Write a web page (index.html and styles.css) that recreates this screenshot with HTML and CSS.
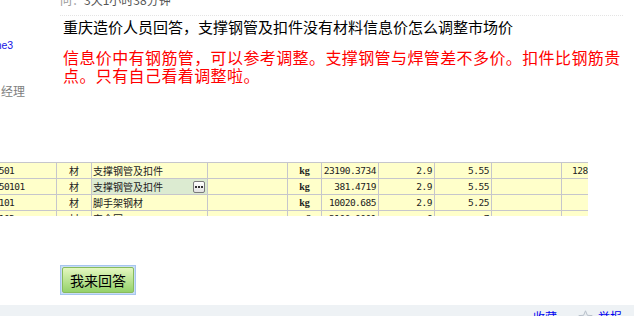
FILE: index.html
```html
<!DOCTYPE html>
<html lang="zh-CN">
<head>
<meta charset="utf-8">
<title>问答</title>
<link rel="stylesheet" href="styles.css">
</head>
<body>
<div class="post">
  <aside class="author">
    <div class="author-name">wayne3</div>
    <div class="author-role">项目经理</div>
  </aside>
  <div class="content">
    <div class="meta"><span class="meta-label">问：</span>3天1小时38分钟</div>
    <h1 class="title">重庆造价人员回答，支撑钢管及扣件没有材料信息价怎么调整市场价</h1>
    <p class="answer">信息价中有钢筋管，可以参考调整。支撑钢管与焊管差不多价。扣件比钢筋贵点。只有自己看着调整啦。</p>
  </div>
</div>

<div class="shot">
  <div class="grid">
    <div class="cell code">040501</div>
    <div class="cell mid">材</div>
    <div class="cell name">支撑钢管及扣件</div>
    <div class="cell"></div>
    <div class="cell unit">kg</div>
    <div class="cell num">23190.3734</div>
    <div class="cell num">2.9</div>
    <div class="cell num">5.55</div>
    <div class="cell"></div>
    <div class="cell num left">128706.58</div>

    <div class="cell code">04050101</div>
    <div class="cell mid">材</div>
    <div class="cell name sel">支撑钢管及扣件<span class="more"><svg width="8" height="2" viewBox="0 0 8 2"><rect x="0" y="0" width="2" height="2" fill="#333"/><rect x="3" y="0" width="2" height="2" fill="#333"/><rect x="6" y="0" width="2" height="2" fill="#333"/></svg></span></div>
    <div class="cell"></div>
    <div class="cell unit">kg</div>
    <div class="cell num">381.4719</div>
    <div class="cell num">2.9</div>
    <div class="cell num">5.55</div>
    <div class="cell"></div>
    <div class="cell"></div>

    <div class="cell code">040101</div>
    <div class="cell mid">材</div>
    <div class="cell name">脚手架钢材</div>
    <div class="cell"></div>
    <div class="cell unit">kg</div>
    <div class="cell num">10020.685</div>
    <div class="cell num">2.9</div>
    <div class="cell num">5.25</div>
    <div class="cell"></div>
    <div class="cell"></div>

    <div class="cell code">040102</div>
    <div class="cell mid">材</div>
    <div class="cell name">安全网</div>
    <div class="cell"></div>
    <div class="cell unit">m2</div>
    <div class="cell num">3100.0001</div>
    <div class="cell num">6</div>
    <div class="cell num">7</div>
    <div class="cell"></div>
    <div class="cell"></div>
  </div>
</div>

<div class="actions">
  <span class="reply"><button class="reply-btn" type="button">我来回答</button></span>
</div>

<div class="footer">
  <a class="footer-link fav" href="#">收藏</a>
  <svg class="star" width="15" height="15" viewBox="0 0 15 15"><polygon points="7.5,0.8 9.4,5.3 14.2,5.6 10.5,8.7 11.7,13.6 7.5,11 3.3,13.6 4.5,8.7 0.8,5.6 5.6,5.3" fill="#e9edf1" stroke="#b8c0ca" stroke-width="1"/></svg>
  <a class="footer-link" href="#">举报</a>
</div>
</body>
</html>
```

FILE: styles.css
```css
html, body {
  margin: 0;
  padding: 0;
}

body {
  width: 634px;
  height: 316px;
  overflow: hidden;
  background: #fff;
  font-family: "Noto Sans CJK SC", sans-serif;
}

/* ---------- post ---------- */
.post {
  display: flex;
  align-items: flex-start;
  margin-top: -8px;
  height: 106px;
}

.author {
  flex: 0 0 86px;
  margin-left: -23px;
  white-space: nowrap;
}

.author-name {
  margin-top: 47px;
  font-family: "Liberation Sans", sans-serif;
  font-size: 10.5px;
  line-height: 12px;
  color: #1414e6;
}

.author-role {
  margin-top: 33px;
  font-size: 12px;
  line-height: 14px;
  color: #808080;
}

.content {
  width: 560px;
}

.meta {
  margin-left: -3px;
  font-size: 12px;
  line-height: 16px;
  color: #555;
  padding-bottom: 7px;
  border-bottom: 1px dotted #e4e4e4;
}

.meta-label {
  color: #9a9a9a;
}

.title {
  margin: 0;
  font-size: 15px;
  line-height: 22px;
  font-weight: normal;
  color: #000;
}

.answer {
  margin: 10px 0 0;
  font-size: 16px;
  line-height: 18px;
  letter-spacing: 0.4px;
  color: #f00;
}

/* ---------- table screenshot ---------- */
.shot {
  margin: 64px 0 0 -20px;
  width: 608px;
  height: 54px;
  overflow: hidden;
}

.grid {
  display: grid;
  grid-template-columns: 77px 35px 116px 80px 34px 57px 56px 57px 70px 80px;
  grid-auto-rows: 16px;
  width: 662px;
  border-top: 1px solid #c6c6cc;
  background: #ffffca;
}

.cell {
  box-sizing: border-box;
  border-right: 1px solid #c6c6cc;
  border-bottom: 1px solid #c6c6cc;
  font-size: 10px;
  line-height: 15px;
  color: #222;
  white-space: nowrap;
  overflow: hidden;
}

.code {
  padding-left: 3px;
  font-family: "DejaVu Sans Mono", monospace;
  font-size: 9.5px;
  letter-spacing: -0.5px;
}

.num {
  padding-right: 2px;
  text-align: right;
  font-family: "DejaVu Sans Mono", monospace;
  font-size: 9.5px;
  letter-spacing: -0.5px;
}

.num.left {
  text-align: left;
  padding-left: 10px;
}

.mid {
  text-align: center;
}

.unit {
  text-align: center;
  font-family: "Liberation Serif", serif;
  font-weight: bold;
}

.name {
  padding-left: 1px;
  display: flex;
  align-items: center;
  justify-content: space-between;
}

.sel {
  background: #dcebd1;
}

.more {
  display: flex;
  align-items: center;
  justify-content: center;
  width: 12px;
  height: 12px;
  box-sizing: border-box;
  margin-right: 2px;
  border: 1px solid #7a7a7a;
  border-radius: 2px;
  background: linear-gradient(#ffffff, #e2e2e2);
}

/* ---------- answer button ---------- */
.actions {
  display: flex;
  margin-top: 49px;
  padding-left: 60px;
  height: 30px;
}

.reply {
  display: block;
  border: 1px solid #a6c6ee;
  padding: 1px;
  background: #c9ddf6;
}

.reply-btn {
  display: block;
  margin: 0;
  padding: 0 7px;
  border: 1px solid #88bb5c;
  border-radius: 2px;
  background: linear-gradient(#e4f8c0, #94d16a);
  font-family: "Noto Sans CJK SC", sans-serif;
  font-size: 14px;
  line-height: 24px;
  color: #000;
}

/* ---------- footer ---------- */
.footer {
  margin-top: 10px;
  height: 30px;
  box-sizing: border-box;
  padding: 4px 12px 0 0;
  background: #eef2f5;
  display: flex;
  justify-content: flex-end;
  align-items: flex-start;
  font-size: 12px;
  line-height: 16px;
}

.footer-link {
  color: #0000f0;
  text-decoration: none;
}

.fav {
  margin-right: 21px;
}

.star {
  margin: 1px 5px 0 0;
}
```
